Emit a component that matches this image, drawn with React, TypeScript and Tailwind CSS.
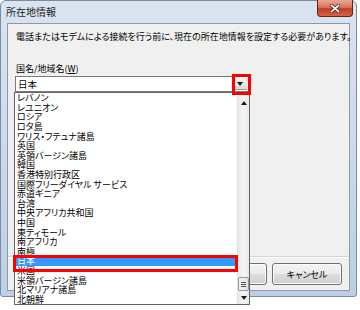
import React from 'react';

const countries = [
  'レバノン',
  'レユニオン',
  'ロシア',
  'ロタ島',
  'ワリス・フテュナ諸島',
  '英国',
  '英領バージン諸島',
  '韓国',
  '香港特別行政区',
  '国際フリーダイヤル サービス',
  '赤道ギニア',
  '台湾',
  '中央アフリカ共和国',
  '中国',
  '東ティモール',
  '南アフリカ',
  '南極',
  '日本',
  '米国',
  '米領バージン諸島',
  '北マリアナ諸島',
  '北朝鮮',
];

const Arrow: React.FC<{ up?: boolean }> = ({ up }) => (
  <svg width="6" height="4" viewBox="0 0 6 4">
    <path d={up ? 'M0 4 L3 0 L6 4 Z' : 'M0 0 L6 0 L3 4 Z'} fill="#1a1a1a" />
  </svg>
);

const WinButton: React.FC<{ label: string }> = ({ label }) => (
  <div className="w-[70px] h-[22px] rounded-[3px] border border-[#707070] bg-[linear-gradient(to_bottom,#f4f4f4_0%,#ebebeb_48%,#dddddd_52%,#cfcfcf_100%)] shadow-[inset_0_0_0_1px_#fcfcfc] flex items-center justify-center text-[9px]">
    {label}
  </div>
);

export default function App() {
  return (
    <div className="relative w-[360px] h-[310px] bg-white overflow-hidden text-black font-['Noto_Sans_CJK_JP',sans-serif] [font-feature-settings:'palt'] leading-none">
      {/* window */}
      <div className="w-[357px] h-[297px] rounded-t-[6px] rounded-b-[3px] border border-[#7c8a9b] bg-[linear-gradient(to_bottom,#dae4f0_0%,#cfdcec_40%,#bccfe5_100%)] flex flex-col px-[6px] pb-[5px]">
        <div className="h-[22px] flex items-start">
          <span className="-ml-[1px] mt-[5px] text-[10px] leading-[12px] text-[#1e1e1e]">所在地情報</span>
          <div className="ml-auto -mt-[1px] -mr-[3px] w-[36px] h-[17px] rounded-b-[4px] border border-t-0 border-[#5e2619] bg-[linear-gradient(to_bottom,#eaa897_0%,#d8765f_45%,#c33c22_55%,#d6654a_100%)] flex items-center justify-center">
            <svg width="10" height="9" viewBox="0 0 10 9">
              <path d="M1.5 1.5 L8.5 7.5 M8.5 1.5 L1.5 7.5" stroke="#4a1a10" strokeWidth="3.2" strokeLinecap="square" />
              <path d="M1.5 1.5 L8.5 7.5 M8.5 1.5 L1.5 7.5" stroke="#ffffff" strokeWidth="1.7" strokeLinecap="square" />
            </svg>
          </div>
        </div>

        {/* client */}
        <div className="flex-1 border border-[#8d9aab] bg-[#f0f0f0] flex flex-col">
          <div className="pl-[8px] pt-[7px] flex flex-col">
            <p className="text-[9px] leading-[12px] whitespace-nowrap">
              電話またはモデムによる接続を行う前に、現在の所在地情報を設定する必要があります。
            </p>
            <p className="mt-[20px] text-[9px] leading-[12px]">
              国名/地域名(<span className="underline">W</span>)
            </p>
            <div className="-ml-[1px] mt-[1px] w-[234px] h-[16px] border border-[#7a7a7a] bg-white flex items-center">
              <span className="pl-[2px] text-[9.5px] leading-[12px]">日本</span>
              <div className="ml-auto mr-[1px] w-[15px] h-[12px] bg-[linear-gradient(to_bottom,#f3f3f3,#dcdcdc)] border-b border-[#9a9a9a] flex items-center justify-center">
                <Arrow />
              </div>
            </div>
          </div>

          <div className="mt-auto border-t border-[#d4d4d4] shadow-[inset_0_1px_0_#ffffff] flex justify-end gap-[5px] pt-[6px] pr-[7px] pb-[5px]">
            <WinButton label="OK" />
            <WinButton label="キャンセル" />
          </div>
        </div>
      </div>

      {/* dropdown list */}
      <div className="absolute left-[14px] top-[92px] w-[236px] h-[213px] border border-[#646464] bg-white flex">
        <div className="flex-1 flex flex-col">
          {countries.map((c) => (
            <div
              key={c}
              className={`flex-1 min-h-0 flex items-center pl-[2px] text-[9px] whitespace-nowrap ${
                c === '日本' ? 'bg-[#3399ff] text-white' : ''
              }`}
            >
              {c}
            </div>
          ))}
        </div>
        <div className="w-[12px] border-l border-[#e2e2e2] bg-[linear-gradient(to_right,#e8e8e8,#f5f5f5,#e8e8e8)] flex flex-col">
          <div className="h-[20px] flex items-center justify-center">
            <Arrow up />
          </div>
          <div className="flex-1" />
          <div className="h-[14px] mx-[0px] rounded-[2px] border border-[#979797] bg-[linear-gradient(to_right,#f2f2f2,#e2e2e2)] flex flex-col items-center justify-center gap-[1px]">
            <div className="w-[5px] h-px bg-[#555]" />
            <div className="w-[5px] h-px bg-[#555]" />
            <div className="w-[5px] h-px bg-[#555]" />
          </div>
          <div className="h-[13px] flex items-center justify-center">
            <Arrow />
          </div>
        </div>
      </div>

      {/* annotation boxes */}
      <div className="absolute left-[232px] top-[74px] w-[19px] h-[21px] border-[3px] border-[#ff0000]" />
      <div className="absolute left-[13px] top-[255px] w-[225px] h-[17px] border-[3px] border-[#ff0000]" />
    </div>
  );
}
